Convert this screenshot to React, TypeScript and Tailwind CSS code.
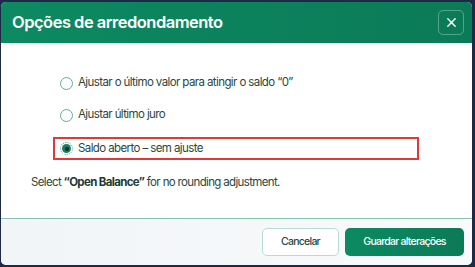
import React from 'react';

const options = [
    { id: 'last', label: 'Ajustar o último valor para atingir o saldo “0”' },
    { id: 'interest', label: 'Ajustar último juro' },
    { id: 'open', label: 'Saldo aberto – sem ajuste' },
];

const Radio: React.FC<{ checked: boolean }> = ({ checked }) =>
    checked ? (
        <span className="flex h-[13px] w-[13px] shrink-0 items-center justify-center rounded-full border border-dotted border-[#3aa58a] p-[1px]">
            <span className="flex h-full w-full items-center justify-center rounded-full bg-[#1f7a63]">
                <span className="h-[4px] w-[4px] rounded-full bg-[#0b2a22]" />
            </span>
        </span>
    ) : (
        <span className="h-[13px] w-[13px] shrink-0 rounded-full border-[1.5px] border-[#4fb39a] bg-white" />
    );

export default function App() {
    const selected = 'open';
    return (
        <div
            className="h-[267px] w-[475px] bg-[#1c2a48] pt-[2px] pr-[3px] pb-[2px] pl-[1px]"
            style={{ fontFamily: 'Inter, "Noto Sans", sans-serif' }}
        >
            <div className="flex h-full flex-col overflow-hidden rounded-[5px] bg-white">
                <div className="flex h-[41px] items-center justify-between bg-gradient-to-r from-[#0c8a62] to-[#0b7a57] pl-[11px] pr-[8px]">
                    <span className="text-[16.5px] font-semibold tracking-[-0.5px] text-white">Opções de arredondamento</span>
                    <button className="flex h-[25px] w-[26px] items-center justify-center rounded-[5px] border border-white/30">
                        <svg width="11" height="11" viewBox="0 0 12 12" fill="none" stroke="white" strokeWidth="1.6" strokeLinecap="round">
                            <path d="M2 2l8 8M10 2l-8 8" />
                        </svg>
                    </button>
                </div>

                <div className="flex flex-1 flex-col pt-[30px]">
                    <div className="flex flex-col gap-[12px] pl-[52px] pr-[53px]">
                        {options.map((o) =>
                            o.id === selected ? (
                                <div key={o.id} className="flex h-[23px] items-center gap-[5px] border-2 border-[#e0393b] pl-[5px]">
                                    <Radio checked />
                                    <span className="text-[11.5px] tracking-[-0.6px] text-[#284840]">{o.label}</span>
                                </div>
                            ) : (
                                <div key={o.id} className="flex h-[20px] items-center gap-[5px] pl-[7px]">
                                    <Radio checked={false} />
                                    <span className="text-[11.5px] tracking-[-0.6px] text-[#284840]">{o.label}</span>
                                </div>
                            )
                        )}
                    </div>
                    <p className="mt-[12px] pl-[30px] text-[11.5px] leading-[20px] tracking-[-0.65px] text-[#284840]">
                        Select <span className="font-bold text-[#1f3a33]">“Open Balance”</span> for no rounding adjustment.
                    </p>
                </div>

                <div className="flex h-[47px] items-center justify-end gap-[6px] border-t border-[#8fbfb0] bg-gradient-to-r from-[#f2f5f8] to-[#f8fafb] pr-[8px]">
                    <button className="h-[28px] w-[77px] rounded-[5px] border border-[#b9dcd2] bg-white text-[10.5px] font-medium tracking-[-0.75px] text-[#284840]">
                        Cancelar
                    </button>
                    <button className="h-[28px] w-[119px] rounded-[5px] bg-gradient-to-r from-[#0c8a62] to-[#0b7a57] text-[10.5px] font-medium tracking-[-0.75px] text-white">
                        Guardar alterações
                    </button>
                </div>
            </div>
        </div>
    );
}
